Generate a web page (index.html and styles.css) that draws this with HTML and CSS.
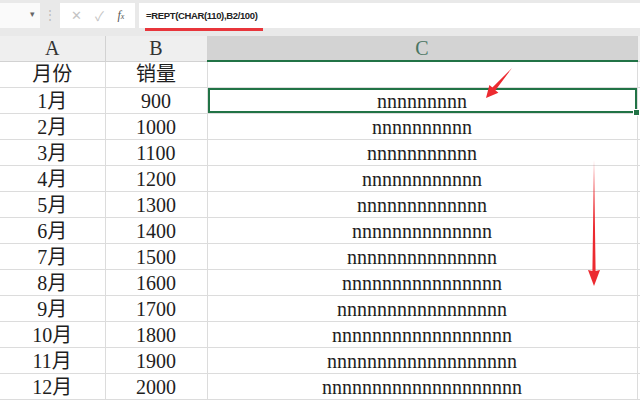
FILE: index.html
```html
<!DOCTYPE html>
<html lang="zh-CN">
<head>
  <meta charset="UTF-8" />
  <title>REPT 图表</title>
  <link rel="stylesheet" href="styles.css">
</head>
<body>

<div id="formula-bar">
  <div class="name-box"><span class="drop">&#9662;</span></div>
  <div class="grip">&#8942;</div>
  <div class="func-box">
    <span class="btn">&#10005;</span>
    <span class="btn">&#10003;</span>
    <span class="fx"><i>f</i><small>x</small></span>
  </div>
  <div class="formula"><span class="formula-text">=REPT(CHAR(110),B2/100)</span></div>
</div>

<table id="sheet">
  <colgroup>
    <col class="col-a"><col class="col-b"><col class="col-c"><col class="col-d">
  </colgroup>
  <tr class="heads">
    <th>A</th><th>B</th><th class="sel">C</th><th></th>
  </tr>
  <tr><td>月份</td><td>销量</td><td></td><td></td></tr>
  <tr><td>1月</td><td>900</td><td class="active">nnnnnnnnn</td><td></td></tr>
  <tr><td>2月</td><td>1000</td><td>nnnnnnnnnn</td><td></td></tr>
  <tr><td>3月</td><td>1100</td><td>nnnnnnnnnnn</td><td></td></tr>
  <tr><td>4月</td><td>1200</td><td>nnnnnnnnnnnn</td><td></td></tr>
  <tr><td>5月</td><td>1300</td><td>nnnnnnnnnnnnn</td><td></td></tr>
  <tr><td>6月</td><td>1400</td><td>nnnnnnnnnnnnnn</td><td></td></tr>
  <tr><td>7月</td><td>1500</td><td>nnnnnnnnnnnnnnn</td><td></td></tr>
  <tr><td>8月</td><td>1600</td><td>nnnnnnnnnnnnnnnn</td><td></td></tr>
  <tr><td>9月</td><td>1700</td><td>nnnnnnnnnnnnnnnnn</td><td></td></tr>
  <tr><td>10月</td><td>1800</td><td>nnnnnnnnnnnnnnnnnn</td><td></td></tr>
  <tr><td>11月</td><td>1900</td><td>nnnnnnnnnnnnnnnnnnn</td><td></td></tr>
  <tr><td>12月</td><td>2000</td><td>nnnnnnnnnnnnnnnnnnnn</td><td></td></tr>
</table>

<!-- red annotation arrows -->
<svg class="arrows" width="640" height="400" viewBox="0 0 640 400">
  <polygon fill="#ec2a30" points="512,68 495.4,90.2 498.4,92.8 486,98 489.4,85 492.4,87.6" />
  <polygon fill="#ec2a30" points="594,160 595.6,271 600,270 594,286 588,270 592.4,271" />
</svg>

</body>
</html>
```

FILE: styles.css
```css
body {
  margin: 0;
  background: #fff;
  font-family: "Liberation Serif", "Noto Sans CJK SC", serif;
  color: #1e1e1e;
  position: relative;
  width: 640px;
  height: 400px;
  overflow: hidden;
}
#formula-bar {
  display: flex;
  align-items: flex-start;
  height: 36px;
  padding-top: 3px;
  box-sizing: border-box;
  background: #e9e9e9;
  font-family: "Liberation Sans", Arial, sans-serif;
}
.name-box {
  width: 40px;
  height: 25px;
  background: #fafafa;
  position: relative;
}
.name-box .drop {
  position: absolute;
  right: 5px;
  top: 6px;
  font-size: 9px;
  color: #666;
}
.grip {
  width: 20px;
  height: 25px;
  line-height: 25px;
  text-align: center;
  font-size: 12px;
  color: #bbb;
}
.func-box {
  width: 75px;
  height: 25px;
  background: #fff;
  display: flex;
  align-items: center;
  justify-content: space-around;
  padding: 0 4px;
  box-sizing: border-box;
}
.func-box .btn {
  font-size: 13px;
  color: #c4c4c4;
}
.func-box .fx {
  font-family: "Liberation Serif", serif;
  font-size: 12px;
  color: #555;
}
.func-box .fx small {
  font-size: 8px;
  font-style: italic;
}
.formula {
  flex: 1;
  margin-left: 4px;
  height: 25px;
  background: #fff;
  display: flex;
  align-items: center;
  padding-left: 7px;
}
.formula-text {
  position: relative;
  font-size: 9.5px;
  font-weight: bold;
  letter-spacing: -0.35px;
  color: #222;
}
.formula-text::after {
  content: "";
  position: absolute;
  left: -1px;
  right: -5px;
  bottom: -10px;
  height: 3px;
  background: #e8353b;
}
#sheet {
  border-collapse: collapse;
  table-layout: fixed;
  width: 644px;
}
.col-a { width: 105px; }
.col-b { width: 102px; }
.col-c { width: 430px; }
.col-d { width: 7px; }
#sheet th {
  height: 24px;
  padding: 0;
  background: #efefef;
  border-right: 1px solid #d2d2d2;
  border-bottom: 1px solid #d2d2d2;
  font-weight: normal;
  font-size: 20px;
  color: #333;
  line-height: 22px;
}
#sheet th.sel {
  background: #d3d3d3;
  border-bottom: 2px solid #217346;
  color: #4a7562;
}
#sheet td {
  height: 25px;
  padding: 0;
  border-right: 1px solid #dcdcdc;
  border-bottom: 1px solid #dcdcdc;
  text-align: center;
  font-size: 20px;
  line-height: 24px;
  white-space: nowrap;
  overflow: hidden;
}
#sheet td.active {
  position: relative;
  box-shadow: inset 0 0 0 2px #217346;
  overflow: visible;
}
#sheet td.active::after {
  content: "";
  position: absolute;
  right: -3px;
  bottom: -3px;
  width: 5px;
  height: 5px;
  background: #217346;
  border: 1px solid #fff;
}
.arrows {
  position: absolute;
  left: 0;
  top: 0;
  pointer-events: none;
}
```
